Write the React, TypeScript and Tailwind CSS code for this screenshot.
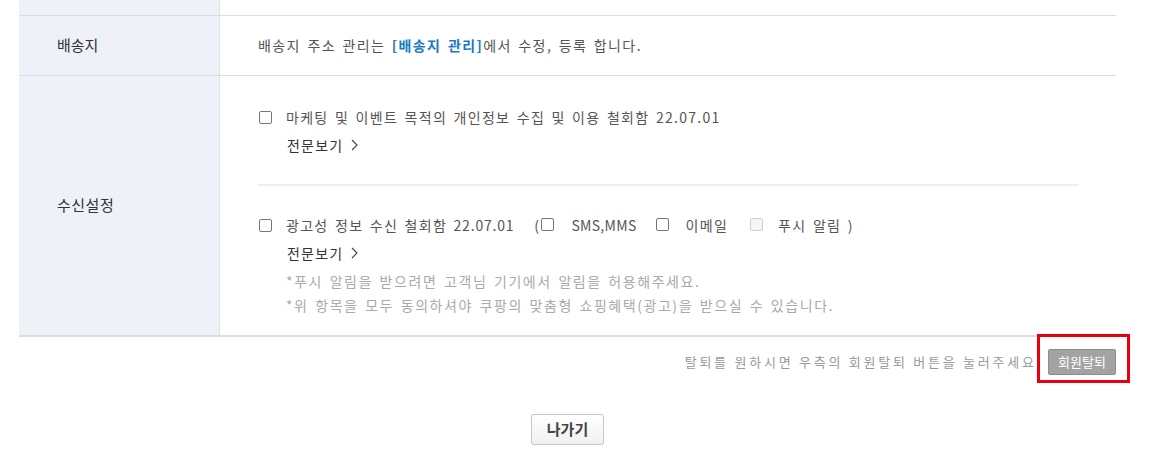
import React from "react";

const FONT = { fontFamily: "'Noto Sans CJK KR', 'Noto Sans', sans-serif" };

function Box({ disabled = false }: { disabled?: boolean }) {
  return (
    <span
      className={
        "inline-block w-[13px] h-[13px] rounded-[2px] border shrink-0 " +
        (disabled ? "border-[#d0d0d0] bg-[#f5f5f5]" : "border-[#767676] bg-white")
      }
    />
  );
}

function More() {
  return (
    <div className="h-[28px] flex items-center pl-[28px] text-[14px] text-[#333] tracking-[1.2px]">
      <span>전문보기</span>
      <svg className="ml-[8px]" width="7" height="12" viewBox="0 0 7 12" fill="none">
        <path d="M1 1l5 5-5 5" stroke="#444" strokeWidth="1.1" />
      </svg>
    </div>
  );
}

export default function App() {
  return (
    <div className="w-[1164px] h-[472px] bg-white overflow-hidden" style={FONT}>
      <div className="ml-[19px] w-[1097px]">
        {/* top partial row */}
        <div className="flex h-[16px] border-b border-[#dddddd]">
          <div className="w-[201px] bg-[#eef1f8] border-r border-[#e2e4ea]" />
          <div className="flex-1" />
        </div>
        {/* 배송지 */}
        <div className="flex h-[60px] border-b border-[#dddddd]">
          <div className="w-[201px] bg-[#eef1f8] border-r border-[#e2e4ea] flex items-center pl-[38px] text-[15px] text-[#333]">
            배송지
          </div>
          <div className="flex-1 flex items-center pl-[38px] text-[14px] text-[#555] tracking-[1.4px] [word-spacing:2px]">
            <span>
              배송지 주소 관리는 <b className="text-[#1a7ac4] font-bold">[배송지 관리]</b>에서 수정, 등록 합니다.
            </span>
          </div>
        </div>
        {/* 수신설정 */}
        <div className="flex border-b-2 border-[#dddddd]">
          <div className="w-[201px] bg-[#eef1f8] border-r border-[#e2e4ea] flex items-center pl-[38px] text-[15px] text-[#333] tracking-[0.5px]">
            수신설정
          </div>
          <div className="flex-1 pl-[39px] pr-[37px] pt-[27px] pb-[18px] tracking-[1.3px] [word-spacing:2px]">
            <div className="h-[28px] flex items-center text-[14px] text-[#555]">
              <Box />
              <span className="ml-[14px]">마케팅 및 이벤트 목적의 개인정보 수집 및 이용 철회함 22.07.01</span>
            </div>
            <More />
            <div className="h-[2px] bg-[#eeeeee] my-[25px] -ml-[1px]" />
            <div className="h-[28px] flex items-center text-[14px] text-[#555]">
              <Box />
              <span className="ml-[14px]">광고성 정보 수신 철회함 <span className="tracking-[0.8px]">22.07.01</span></span>
              <span className="ml-[20px]">(</span>
              <span className="ml-[1px]"><Box /></span>
              <span className="ml-[17px] tracking-[0.3px]">SMS,MMS</span>
              <span className="ml-[19px]"><Box /></span>
              <span className="ml-[17px]">이메일</span>
              <span className="ml-[22px]"><Box disabled /></span>
              <span className="ml-[15px]">푸시 알림 )</span>
            </div>
            <More />
            <div className="pl-[27px] pt-[2px] text-[14px] text-[#aaaaaa] tracking-[1.55px]">
              <div className="h-[24px] flex items-center">*푸시 알림을 받으려면 고객님 기기에서 알림을 허용해주세요.</div>
              <div className="h-[24px] flex items-center">*위 항목을 모두 동의하셔야 쿠팡의 맞춤형 쇼핑혜택(광고)을 받으실 수 있습니다.</div>
            </div>
          </div>
        </div>
        {/* withdraw */}
        <div className="flex items-center justify-end mt-[12px] h-[26px]">
          <span className="text-[13px] text-[#999] tracking-[2.75px]">탈퇴를 원하시면 우측의 회원탈퇴 버튼을 눌러주세요.</span>
          <div className="relative ml-[5px]">
            <button className="h-[26px] w-[68px] bg-[#a3a3a3] border border-[#8c8c8c] rounded-[2px] text-white text-[13px] flex items-center justify-center">
              회원탈퇴
            </button>
            <div className="absolute -left-[11px] -top-[15px] w-[93px] h-[49px] border-[3px] border-[#e60012] pointer-events-none" />
          </div>
        </div>
        {/* exit */}
        <div className="flex justify-center mt-[39px]">
          <button className="w-[73px] h-[31px] rounded-[3px] border border-[#c6c6c6] bg-gradient-to-b from-white to-[#f1f1f1] text-[15px] font-bold text-[#444] flex items-center justify-center">
            나가기
          </button>
        </div>
      </div>
    </div>
  );
}
